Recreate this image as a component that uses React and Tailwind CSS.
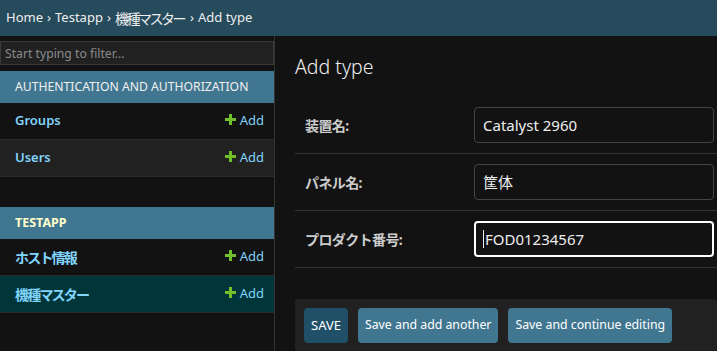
import { useState } from "react";

const font = { fontFamily: '"Noto Sans", "Noto Sans CJK JP", sans-serif' };

function AddIcon() {
    return (
        <svg width="11" height="11" viewBox="0 0 11 11" className="mr-[4px] -mt-[4px]">
            <path d="M4 0h3v4h4v3H7v4H4V7H0V4h4z" fill="#70bf2b" />
        </svg>
    );
}

function NavRow({ label, striped, current, cjk }) {
    const bg = current ? "bg-[#00363a]" : striped ? "bg-[#212121]" : "bg-[#121212]";
    return (
        <div className={`${bg} h-[37px] flex items-center justify-between pl-[15px] pr-[10px] border-b border-[#2a2a2a]`}>
            <a className={cjk ? "text-[14px] font-semibold text-[#81d4fa] tracking-[-1.8px]" : "text-[13px] font-semibold text-[#81d4fa]"}>{label}</a>
            <a className="text-[13px] text-[#81d4fa] flex items-center">
                <AddIcon />
                Add
            </a>
        </div>
    );
}

function Caption({ children, current }) {
    return (
        <div className="bg-[#417690] h-[32px] flex items-center pl-[15px]">
            <span className={current ? "text-[12.5px] font-bold text-[#ffffcc] uppercase" : "text-[12.2px] text-[#f0f0f0] uppercase"}>
                {children}
            </span>
        </div>
    );
}

function FormRow({ label, value, focused }) {
    return (
        <div className="flex items-center py-[10px] pl-[10px] border-b border-[#333]">
            <label className="w-[169px] text-[14px] font-bold text-[#cccccc] tracking-[-0.6px]">{label}:</label>
            <div
                className={
                    focused
                        ? "w-[240px] h-[36px] rounded-[4px] border-2 border-white bg-[#121212] flex items-center pl-[7px] text-[15px] text-[#eeeeee]"
                        : "w-[240px] h-[36px] rounded-[4px] border border-[#444] bg-[#121212] flex items-center pl-[8px] text-[15px] text-[#eeeeee]"
                }
            >
                {focused && <span className="w-px h-[18px] bg-[#eee] mr-px" />}
                {value}
            </div>
        </div>
    );
}

export default function App() {
    const [filter, setFilter] = useState("");

    return (
        <div className="w-[717px] h-[351px] overflow-hidden bg-[#121212] flex flex-col" style={font}>
            <div className="h-[36px] bg-[#264b5d] flex items-center pl-[6px] text-[13px] text-[#eeeeee] shrink-0">
                <a>Home</a>
                <span className="mx-[4px]">›</span>
                <a>Testapp</a>
                <span className="mx-[4px]">›</span>
                <a className="text-[14px] tracking-[-2.5px] mr-[2px]">機種マスター</a>
                <span className="mx-[4px]">›</span>
                <span>Add type</span>
            </div>

            <div className="flex flex-1">
                <nav className="w-[275px] shrink-0 border-r border-[#333] pt-[5px]">
                    <input
                        value={filter}
                        onChange={(e) => setFilter(e.target.value)}
                        placeholder="Start typing to filter..."
                        className="block w-[274px] h-[24px] bg-[#212121] border border-[#3a3a3a] px-[4px] text-[12.2px] text-[#eee] placeholder:text-[#8a8a8a] outline-none"
                    />
                    <div className="mt-[6px]">
                        <Caption>Authentication and Authorization</Caption>
                        <NavRow label="Groups" />
                        <NavRow label="Users" striped />
                    </div>
                    <div className="mt-[30px]">
                        <Caption current>Testapp</Caption>
                        <NavRow label="ホスト情報" cjk />
                        <NavRow label="機種マスター" cjk current />
                    </div>
                </nav>

                <main className="flex-1 pl-[20px] pt-[19px]">
                    <h1 className="text-[19.5px] font-light text-[#eeeeee] leading-[24px] mb-[18px]">Add type</h1>
                    <FormRow label="装置名" value="Catalyst 2960" />
                    <FormRow label="パネル名" value="筐体" />
                    <FormRow label="プロダクト番号" value="FOD01234567" focused />
                    <div className="mt-[31px] bg-[#212121] rounded-[4px] p-[9px] flex gap-[10px]">
                        <button className="h-[35px] px-[7px] rounded-[4px] bg-[#205067] text-[13px] text-white">SAVE</button>
                        <button className="h-[35px] px-[7px] rounded-[4px] bg-[#417690] text-[12.3px] text-white">Save and add another</button>
                        <button className="h-[35px] px-[7px] rounded-[4px] bg-[#417690] text-[12.3px] text-white">Save and continue editing</button>
                    </div>
                </main>
            </div>
        </div>
    );
}
